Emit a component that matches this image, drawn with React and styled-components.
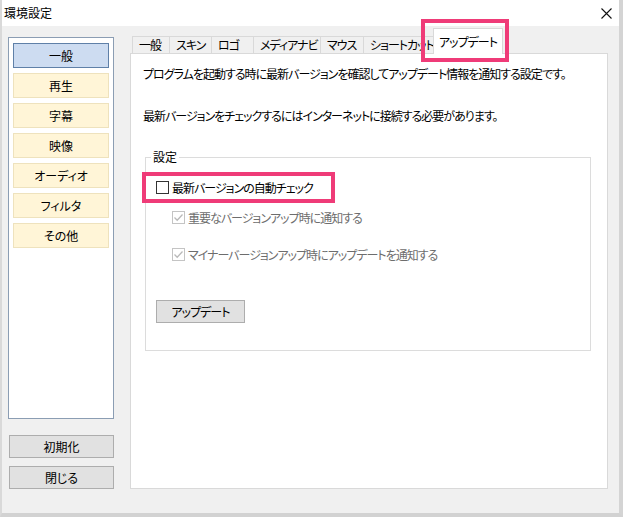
import styled, { createGlobalStyle } from "styled-components";

const GlobalStyle = createGlobalStyle`
  html, body {
    margin: 0;
    padding: 0;
    background: #fff;
  }
  body {
    font-family: "Noto Sans CJK JP", "Noto Sans", sans-serif;
    font-size: 12px;
    font-feature-settings: "palt";
    letter-spacing: -1px;
    color: #000;
  }
`;

const categories = ["一般", "再生", "字幕", "映像", "オーディオ", "フィルタ", "その他"];

const tabs = [
  { label: "一般", width: 38 },
  { label: "スキン", width: 43 },
  { label: "ロゴ", width: 43 },
  { label: "メディアナビ", width: 68 },
  { label: "マウス", width: 44 },
  { label: "ショートカット", width: 72 },
  { label: "アップデート", width: 70, active: true },
];

const Check = () => (
  <svg width="11" height="11" viewBox="0 0 11 11">
    <path d="M1.5 5.5 L4.2 8.2 L9.5 2.5" stroke="#b9b9b9" strokeWidth="1.3" fill="none" />
  </svg>
);

const App = () => {
  return (
    <>
      <GlobalStyle />
      <Window>
        <TitleBar>
          <Title>環境設定</Title>
          <CloseIcon width="11" height="11" viewBox="0 0 11 11">
            <path d="M0.5 0.5 L10.5 10.5 M10.5 0.5 L0.5 10.5" stroke="#111" strokeWidth="1.1" fill="none" />
          </CloseIcon>
        </TitleBar>

        <Body>
          <LeftCol>
            <CategoryList>
              {categories.map((c, i) => (
                <CategoryItem key={c} $selected={i === 0}>{c}</CategoryItem>
              ))}
            </CategoryList>
            <SideButton $gap={16}>初期化</SideButton>
            <SideButton $gap={8}>閉じる</SideButton>
          </LeftCol>

          <RightCol>
            <TabRow>
              {tabs.map((t) => (
                <Tab key={t.label} $width={t.width} $active={t.active}>{t.label}</Tab>
              ))}
            </TabRow>
            <Panel>
              <Text>プログラムを起動する時に最新バージョンを確認してアップデート情報を通知する設定です。</Text>
              <Text $gap={26}>最新バージョンをチェックするにはインターネットに接続する必要があります。</Text>

              <Group>
                <Legend>設定</Legend>
                <CheckRow $gap={14}>
                  <CheckBox />
                  <span>最新バージョンの自動チェック</span>
                </CheckRow>
                <CheckRow $gap={14} $indent $disabled>
                  <CheckBox $disabled><Check /></CheckBox>
                  <span>重要なバージョンアップ時に通知する</span>
                </CheckRow>
                <CheckRow $gap={21} $indent $disabled>
                  <CheckBox $disabled><Check /></CheckBox>
                  <span>マイナーバージョンアップ時にアップデートを通知する</span>
                </CheckRow>
                <UpdateButton>アップデート</UpdateButton>
              </Group>
            </Panel>
          </RightCol>
        </Body>

        <Highlight style={{ left: 419, top: 19, width: 88, height: 43 }} />
        <Highlight style={{ left: 140, top: 172, width: 193, height: 31 }} />
      </Window>
    </>
  );
};

export default App;

const Window = styled.div`
  position: relative;
  width: 623px;
  height: 517px;
  box-sizing: border-box;
  border-left: 2px solid #d9d9d9;
  border-right: 4px solid #d4d4d4;
  border-bottom: 4px solid #d2d2d2;
  background: #f0f0f0;
  display: flex;
  flex-direction: column;
`

const TitleBar = styled.div`
  height: 26px;
  flex-shrink: 0;
  background: #fff;
  display: flex;
  align-items: center;
  justify-content: space-between;
  padding: 0 7px 0 2px;
`

const Title = styled.div`
  line-height: 16px;
  margin-top: -1px;
  letter-spacing: 0;
`

const CloseIcon = styled.svg`
  display: block;
`

const Body = styled.div`
  flex: 1;
  display: flex;
  gap: 16px;
  padding: 2px 11px 24px 6px;
  min-height: 0;
`

const LeftCol = styled.div`
  width: 106px;
  flex-shrink: 0;
  display: flex;
  flex-direction: column;
  padding-top: 9px;
`

const CategoryList = styled.div`
  flex: 1;
  background: #fff;
  border: 1px solid #8b9db3;
  padding: 5px 4px;
  display: flex;
  flex-direction: column;
  gap: 5px;
`

const CategoryItem = styled.div`
  height: 25px;
  box-sizing: border-box;
  display: flex;
  align-items: center;
  justify-content: center;
  letter-spacing: 0;
  background: ${(p) => (p.$selected ? "#cddcf1" : "#fff5d7")};
  border: 1px solid ${(p) => (p.$selected ? "#5f80a8" : "#eee2bd")};
`

const SideButton = styled.div`
  height: 23px;
  box-sizing: border-box;
  margin-top: ${(p) => p.$gap}px;
  margin-left: 1px;
  letter-spacing: 0;
  background: #e1e1e1;
  border: 1px solid #adadad;
  display: flex;
  align-items: center;
  justify-content: center;
`

const RightCol = styled.div`
  flex: 1;
  min-width: 0;
  display: flex;
  flex-direction: column;
`

const TabRow = styled.div`
  height: 25px;
  display: flex;
  align-items: flex-end;
  padding-left: 2px;
  position: relative;
  z-index: 1;
`

const Tab = styled.div`
  width: ${(p) => p.$width}px;
  flex-shrink: 0;
  height: ${(p) => (p.$active ? 26 : 17)}px;
  box-sizing: border-box;
  margin-left: ${(p) => (p.$active ? -2 : -1)}px;
  margin-bottom: ${(p) => (p.$active ? -1 : 0)}px;
  border: 1px solid #d9d9d9;
  border-bottom: none;
  background: ${(p) => (p.$active ? "#fff" : "#f0f0f0")};
  padding: ${(p) => (p.$active ? "5px 0 0 5px" : "0 0 0 6px")};
  line-height: 16px;
  white-space: nowrap;
  position: relative;
  z-index: ${(p) => (p.$active ? 2 : 1)};

  &:first-child {
    margin-left: 0;
  }
`

const Panel = styled.div`
  flex: 1;
  background: #fff;
  border: 1px solid #d9d9d9;
  padding: 12px 12px 0 12px;
`

const Text = styled.div`
  line-height: 16px;
  margin-top: ${(p) => p.$gap || 0}px;
  white-space: nowrap;
`

const Group = styled.fieldset`
  margin: 25px 0 0 2px;
  width: 446px;
  box-sizing: border-box;
  border: 1px solid #dcdcdc;
  padding: 0 10px 27px 10px;
`

const Legend = styled.legend`
  padding: 0 2px;
  margin-left: -5px;
  line-height: 16px;
  letter-spacing: 0;
`

const CheckRow = styled.div`
  display: flex;
  align-items: center;
  gap: 3px;
  height: 16px;
  margin-top: ${(p) => p.$gap}px;
  margin-left: ${(p) => (p.$indent ? 16 : 0)}px;
  color: ${(p) => (p.$disabled ? "#6d6d6d" : "#000")};
  white-space: nowrap;
`

const CheckBox = styled.span`
  width: 13px;
  height: 13px;
  box-sizing: border-box;
  border: 1px solid ${(p) => (p.$disabled ? "#c4c4c4" : "#333")};
  background: #fff;
  display: flex;
  align-items: center;
  justify-content: center;
  flex-shrink: 0;
`

const UpdateButton = styled.div`
  width: 89px;
  height: 23px;
  box-sizing: border-box;
  margin-top: 38px;
  background: #e1e1e1;
  border: 1px solid #adadad;
  display: flex;
  align-items: center;
  justify-content: center;
`

const Highlight = styled.div`
  position: absolute;
  box-sizing: border-box;
  border: 4px solid #ef3b78;
  pointer-events: none;
  z-index: 5;
`
